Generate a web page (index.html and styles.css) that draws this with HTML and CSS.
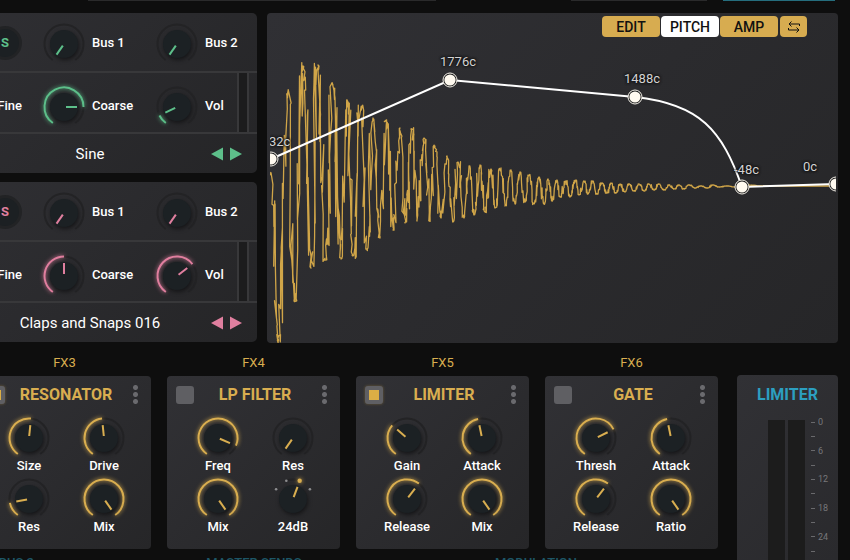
FILE: index.html
```html
<!DOCTYPE html>
<html lang="en">
<head>
    <meta charset="UTF-8">
    <title>Drum Synth</title>
    <link rel="stylesheet" href="styles.css">
</head>
<body>
<div class="app">
    <div class="tabs">
        <span class="tab tab-wide"></span>
        <span class="tab tab-small"></span>
        <span class="tab tab-active"></span>
    </div>

    <main class="upper">
        <div class="tracks">
            <section class="track green">
                <div class="row row-bus">
                    <div class="side"><button class="solo">S</button></div>
                    <label class="knob" data-value="0">Bus 1</label>
                    <label class="knob" data-value="0">Bus 2</label>
                </div>
                <div class="row row-pitch">
                    <div class="side">Fine</div>
                    <label class="knob" data-value="81">Coarse</label>
                    <label class="knob" data-value="10">Vol</label>
                    <div class="level"></div>
                </div>
                <div class="row-name">
                    <span class="name">Sine</span>
                    <button class="arrow" aria-label="Previous"><svg viewBox="0 0 12 14"><path d="M12 0.5v13L0 7z"/></svg></button>
                    <button class="arrow" aria-label="Next"><svg viewBox="0 0 12 14"><path d="M0 0.5v13L12 7z"/></svg></button>
                </div>
            </section>
            <section class="track pink">
                <div class="row row-bus">
                    <div class="side"><button class="solo">S</button></div>
                    <label class="knob" data-value="0">Bus 1</label>
                    <label class="knob" data-value="0">Bus 2</label>
                </div>
                <div class="row row-pitch">
                    <div class="side">Fine</div>
                    <label class="knob" data-value="50">Coarse</label>
                    <label class="knob" data-value="68">Vol</label>
                    <div class="level"></div>
                </div>
                <div class="row-name">
                    <span class="name">Claps and Snaps 016</span>
                    <button class="arrow" aria-label="Previous"><svg viewBox="0 0 12 14"><path d="M12 0.5v13L0 7z"/></svg></button>
                    <button class="arrow" aria-label="Next"><svg viewBox="0 0 12 14"><path d="M0 0.5v13L12 7z"/></svg></button>
                </div>
            </section>
        </div>

        <section class="wave">
            <svg class="graph" viewBox="0 0 571 330">
                <defs>
                    <clipPath id="inner"><rect x="3" y="0" width="566" height="330"/></clipPath>
                </defs>
                <g clip-path="url(#inner)">
                    <path id="sample" class="sample"/>
                    <path class="curve" d="M4 146L183 67L368 84C433 91 455 117 475 174L569 171"/>
                    <g id="handles"></g>
                    <text class="cents" x="2" y="133">32c</text>
                    <text class="cents" x="173" y="53">1776c</text>
                    <text class="cents" x="357" y="70">1488c</text>
                    <text class="cents" x="467" y="161">-48c</text>
                    <text class="cents" x="536" y="158">0c</text>
                </g>
            </svg>
            <div class="modes">
                <button class="mode">EDIT</button>
                <button class="mode selected">PITCH</button>
                <button class="mode">AMP</button>
                <button class="mode swap" aria-label="Swap">
                    <svg viewBox="0 0 12 12"><path d="M11.5 5V3H1M3.5 0.5L1 3l2.5 2.5M0.5 7v2H11M8.5 6.5L11 9l-2.5 2.5"/></svg>
                </button>
            </div>
        </section>
    </main>

    <div class="lower">
        <div class="effects">
            <div class="fx">
                <h2>FX3</h2>
                <section class="card">
                    <header>
                        <input type="checkbox" aria-label="Resonator on" checked>
                        <h3>RESONATOR</h3>
                        <button class="more" aria-label="Menu"></button>
                    </header>
                    <div class="knobs">
                        <label class="knob" data-value="52">Size</label>
                        <label class="knob" data-value="48">Drive</label>
                        <label class="knob" data-value="15">Res</label>
                        <label class="knob" data-value="100">Mix</label>
                    </div>
                </section>
            </div>
            <div class="fx">
                <h2>FX4</h2>
                <section class="card">
                    <header>
                        <input type="checkbox" aria-label="LP filter on">
                        <h3>LP FILTER</h3>
                        <button class="more" aria-label="Menu"></button>
                    </header>
                    <div class="knobs">
                        <label class="knob" data-value="89">Freq</label>
                        <label class="knob" data-value="0">Res</label>
                        <label class="knob" data-value="100">Mix</label>
                        <label class="knob" data-value="57" data-stepped>24dB</label>
                    </div>
                </section>
            </div>
            <div class="fx">
                <h2>FX5</h2>
                <section class="card">
                    <header>
                        <input type="checkbox" aria-label="Limiter on" checked>
                        <h3>LIMITER</h3>
                        <button class="more" aria-label="Menu"></button>
                    </header>
                    <div class="knobs">
                        <label class="knob" data-value="33">Gain</label>
                        <label class="knob" data-value="46">Attack</label>
                        <label class="knob" data-value="63">Release</label>
                        <label class="knob" data-value="100">Mix</label>
                    </div>
                </section>
            </div>
            <div class="fx">
                <h2>FX6</h2>
                <section class="card">
                    <header>
                        <input type="checkbox" aria-label="Gate on">
                        <h3>GATE</h3>
                        <button class="more" aria-label="Menu"></button>
                    </header>
                    <div class="knobs">
                        <label class="knob" data-value="72">Thresh</label>
                        <label class="knob" data-value="46">Attack</label>
                        <label class="knob" data-value="63">Release</label>
                        <label class="knob" data-value="100">Ratio</label>
                    </div>
                </section>
            </div>
            <div class="sections">
                <span>BUS 2</span>
                <span>MASTER SENDS</span>
                <span>MODULATION</span>
            </div>
        </div>

        <section class="output">
            <h3>LIMITER</h3>
            <div class="meter">
                <div class="bar"></div>
                <div class="bar"></div>
                <ul class="scale">
                    <li>0</li>
                    <li></li>
                    <li>6</li>
                    <li></li>
                    <li>12</li>
                    <li></li>
                    <li>18</li>
                    <li></li>
                    <li>24</li>
                    <li></li>
                    <li></li>
                    <li></li>
                </ul>
            </div>
        </section>
    </div>
</div>
<script src="script.js"></script>
</body>
</html>
```

FILE: styles.css
```css
* {
    box-sizing: border-box;
    margin: 0;
    padding: 0;
}

body {
    background: #0e0e0e;
    color: #fff;
    font: 500 13px/16px Roboto, "Liberation Sans", sans-serif;
}

button {
    border: 0;
    background: none;
    font: inherit;
    cursor: pointer;
}

.app {
    height: 100vh;
    padding-right: 12px;
    overflow: hidden;
}

.green {
    --accent: #5dbf8a;
}

.pink {
    --accent: #e07f9f;
}

.effects {
    --accent: #d9ae50;
}

/* bottom edge of the tab strip */
.tabs {
    display: flex;
    justify-content: flex-end;
    height: 13px;
    padding-right: 3px;
}

.tab {
    height: 1px;
    background: #2a2a2b;
}

.tab-wide {
    width: 348px;
    margin-right: 135px;
}

.tab-small {
    width: 136px;
    margin-right: 16px;
}

.tab-active {
    width: 112px;
    background: #256d7d;
}

.upper {
    display: flex;
    gap: 10px;
}

/* tracks */
.tracks {
    display: flex;
    flex-direction: column;
    flex: none;
    gap: 9px;
    width: 330px;
    margin-left: -73px;
}

.track {
    border-radius: 5px;
    background: linear-gradient(135deg, #303034, #252527);
    overflow: hidden;
}

.row {
    display: grid;
    grid-template-columns: 113px 113px 82px 12px;
    align-items: center;
    padding-left: 2px;
    border-bottom: 2px solid #38383a;
    white-space: nowrap;
}

.row-bus {
    height: 60px;
    padding-top: 2px;
}

.row-pitch {
    height: 61px;
}

.row-pitch .knob,
.row-pitch .side {
    padding-top: 6px;
}

.side {
    display: flex;
    justify-content: flex-end;
    padding-right: 20px;
}

.solo {
    width: 34px;
    height: 34px;
    border: 3px solid #222325;
    border-radius: 50%;
    background: #1c2023;
    color: var(--accent);
    font-weight: 700;
}

.level {
    align-self: stretch;
    border: solid #38383a;
    border-width: 0 2px;
    background: #1c1c1d;
}

.row-name {
    display: flex;
    align-items: center;
    gap: 7px;
    height: 39px;
    padding: 0 15px 0 49px;
}

.name {
    flex: 1;
    text-align: center;
    font-size: 15px;
    font-weight: 400;
}

.arrow {
    width: 12px;
    height: 14px;
}

.arrow svg {
    display: block;
    fill: var(--accent);
}

/* knobs */
.knob {
    position: relative;
    display: flex;
    align-items: center;
    gap: 6px;
}

.knob svg {
    flex: none;
    width: 44px;
    height: 42px;
    overflow: visible;
}

.knob input {
    position: absolute;
    width: 44px;
    height: 42px;
    opacity: 0;
    cursor: pointer;
}

.groove,
.amount,
.pointer {
    fill: none;
    stroke-width: 2;
}

.groove {
    stroke: #232325;
}

.amount {
    stroke: var(--accent);
    filter: drop-shadow(0 0 2px var(--accent));
}

.body {
    fill: #1c2124;
    filter: drop-shadow(1px 2px 2px #151517);
}

.pointer {
    stroke: var(--accent);
}

.dot {
    fill: #8d8d8f;
}

.dot.on {
    fill: var(--accent);
    filter: drop-shadow(0 0 2px var(--accent));
}

/* waveform */
.wave {
    position: relative;
    flex: 1;
    min-width: 0;
    border-radius: 4px;
    background: linear-gradient(135deg, #303034, #262628);
}

.graph {
    display: block;
    width: 100%;
}

.sample {
    fill: none;
    stroke: #d0a548;
    stroke-width: 1.3;
    stroke-linejoin: round;
}

.curve {
    fill: none;
    stroke: #fff;
    stroke-width: 2;
}

.halo {
    fill: #222;
    stroke: #f4f0e8;
    stroke-width: 1;
}

.handle {
    fill: #fffaf0;
}

.cents {
    fill: #d2d2d2;
    font-size: 13px;
    font-weight: 400;
    text-shadow: 0 0 3px #111, 0 0 3px #111, 0 0 2px #111;
}

.modes {
    position: absolute;
    top: 3px;
    right: 31px;
    display: flex;
    gap: 1px;
}

.mode {
    width: 58px;
    height: 21px;
    border-radius: 4px;
    background: #d7ac50;
    color: #111;
    font-size: 14px;
}

.mode.selected {
    background: #fff;
}

.mode.swap {
    width: 27px;
    margin-left: 1px;
}

.swap svg {
    display: block;
    width: 12px;
    height: 12px;
    margin: auto;
    fill: none;
    stroke: #111;
}

/* effects */
.lower {
    display: flex;
    gap: 19px;
}

.effects {
    display: grid;
    flex: 1;
    grid-template-columns: repeat(4, 1fr);
    align-content: start;
    gap: 6px 16px;
    margin-left: -22px;
}

.fx h2 {
    padding: 12px 0 5px;
    color: var(--accent);
    font-size: 13px;
    font-weight: 400;
    text-align: center;
}

.card {
    height: 173px;
    border-radius: 4px;
    background: linear-gradient(135deg, #313135, #262628);
}

.card header {
    display: grid;
    grid-template-columns: 20px 1fr 20px;
    align-items: center;
    height: 37px;
    padding: 0 6px 0 9px;
}

h3 {
    color: var(--accent);
    font-size: 16px;
    font-weight: 700;
    text-align: center;
}

.card input[type="checkbox"] {
    appearance: none;
    width: 18px;
    height: 18px;
    border: 4px solid #5f5f63;
    border-radius: 3px;
    background: #5f5f63;
}

.card input[type="checkbox"]:checked {
    background: #dcae45;
    box-shadow: 0 0 3px #6d5c38;
}

.more {
    height: 21px;
    background: radial-gradient(circle, #6a6a6e 2px, transparent 3px) center / 7px 7px repeat-y;
}

.knobs {
    display: grid;
    grid-template-columns: 75px 75px;
    justify-content: center;
    gap: 3px 0;
    padding: 3px 0 0 4px;
}

.knobs .knob {
    flex-direction: column;
    gap: 0;
}

.sections {
    grid-column: 1 / -1;
    display: flex;
    color: #1d5666;
}

.sections span {
    width: 282px;
    text-align: center;
}

.sections span:first-child {
    width: 56px;
    margin-right: 79px;
    text-align: right;
}

/* output limiter */
.output {
    --accent: #2c9fc0;
    width: 101px;
    height: 220px;
    margin-top: 32px;
    border-radius: 4px;
    background: linear-gradient(135deg, #313135, #29292c);
    overflow: hidden;
}

.output h3 {
    padding: 12px 0 17px;
}

.meter {
    display: flex;
    gap: 3px;
    padding-left: 31px;
}

.bar {
    width: 17px;
    height: 180px;
    background: #1c1c1c;
}

.scale {
    display: grid;
    grid-template-rows: repeat(12, 1fr);
    height: 172px;
    margin: -5px 0 0 3px;
    list-style: none;
    color: #77777a;
    font-size: 9px;
    font-weight: 400;
    line-height: 14px;
}

.scale li {
    display: flex;
    align-items: center;
    gap: 3px;
}

.scale li::before {
    content: "";
    width: 4px;
    height: 1px;
    background: #69696c;
}
```

FILE: script.js
```js
var NS = "http://www.w3.org/2000/svg";

// point on a circle round the knob centre, 0 degrees is up
function polar(r, deg) {
    var a = deg * Math.PI / 180;
    return (22 + r * Math.sin(a)).toFixed(2) + " " + (22 - r * Math.cos(a)).toFixed(2);
}

function arc(from, to) {
    var large = to - from > 180 ? 1 : 0;
    return "M" + polar(19.5, from) + "A19.5 19.5 0 " + large + " 1 " + polar(19.5, to);
}

function drawKnob(label) {
    var value = Number(label.dataset.value);
    var angle = -145 + 290 * value / 100;
    var stepped = "stepped" in label.dataset;
    var html = '<path class="groove" d="' + (stepped ? arc(-20, 20) : arc(-145, 145)) + '"/>';
    if (stepped) {
        [-60, -20, 20, 60].forEach(function (deg) {
            var p = polar(19.5, deg).split(" ");
            var on = deg == 20;
            html += '<circle class="dot' + (on ? " on" : "") + '" cx="' + p[0] + '" cy="' + p[1] + '" r="' + (on ? 2.2 : 1.3) + '"/>';
        });
    } else if (value > 0) {
        html += '<path class="amount" d="' + arc(-145, angle) + '"/>';
    }
    html += '<circle class="body" cx="22" cy="22" r="14"/>';
    html += '<path class="pointer" d="M' + polar(2, angle) + "L" + polar(13, angle) + '"/>';

    var svg = document.createElementNS(NS, "svg");
    svg.setAttribute("viewBox", "0 0 44 42");
    svg.innerHTML = html;
    var input = document.createElement("input");
    input.type = "range";
    input.value = value;
    label.prepend(svg, input);
}

document.querySelectorAll(".knob").forEach(drawKnob);

// turning points of the sample: x, y
var turns = [
    [4, 159], [11, 329], [21, 78], [27, 288], [36, 53], [44, 255], [51, 52], [58, 247], [65, 70],
    [74, 246], [80, 87], [86, 243], [94, 94], [100, 237], [106, 105], [113, 225], [119, 108], [126, 217],
    [133, 115], [138, 210], [145, 116], [150, 208], [157, 125], [163, 208], [168, 133], [174, 205],
    [180, 143], [186, 209], [191, 149], [197, 205], [202, 153], [207, 202], [213, 152], [218, 199],
    [224, 156], [228, 195], [234, 155], [238, 193], [244, 157], [248, 191], [253, 159], [258, 189],
    [262, 162], [267, 191], [272, 164], [277, 191], [281, 166], [285, 188], [290, 167], [293, 184],
    [299, 168], [303, 184], [309, 167], [312, 182], [317, 168], [321, 181], [326, 168], [330, 181],
    [335, 170], [340, 180], [344, 170], [349, 180], [353, 171], [358, 179], [362, 171], [367, 178],
    [372, 171], [377, 178], [382, 171], [387, 177], [392, 171], [397, 177], [402, 172], [407, 176],
    [412, 172], [417, 176], [422, 172], [428, 175], [434, 173], [440, 175], [446, 172], [452, 174],
    [460, 173], [468, 174], [480, 172], [495, 173], [520, 173], [569, 173]
];

var seed = 7;
function noise() {
    seed = (seed * 16807) % 2147483647;
    return seed / 2147483647 - 0.5;
}

function drawSample() {
    var d = "M" + turns[0].join(" ");
    for (var i = 1; i < turns.length; i++) {
        var a = turns[i - 1];
        var b = turns[i];
        var height = Math.abs(b[1] - a[1]);
        var steps = Math.max(6, Math.round((b[0] - a[0]) * 2.5));
        for (var s = 1; s < steps; s++) {
            var t = s / steps;
            var k = (1 - Math.cos(Math.PI * t)) / 2;
            var bend = Math.sin(Math.PI * t);
            var x = a[0] + (b[0] - a[0]) * t + noise() * Math.min(3, height / 40);
            var y = a[1] + (b[1] - a[1]) * k + noise() * height * 0.7 * bend * bend;
            d += "L" + x.toFixed(1) + " " + y.toFixed(1);
        }
        d += "L" + b.join(" ");
    }
    document.getElementById("sample").setAttribute("d", d);
}

drawSample();

var handles = "";
[[4, 146], [183, 67], [368, 84], [475, 174], [569, 171]].forEach(function (p) {
    handles += '<circle class="halo" cx="' + p[0] + '" cy="' + p[1] + '" r="7"/>';
    handles += '<circle class="handle" cx="' + p[0] + '" cy="' + p[1] + '" r="5.6"/>';
});
document.getElementById("handles").innerHTML = handles;
```
